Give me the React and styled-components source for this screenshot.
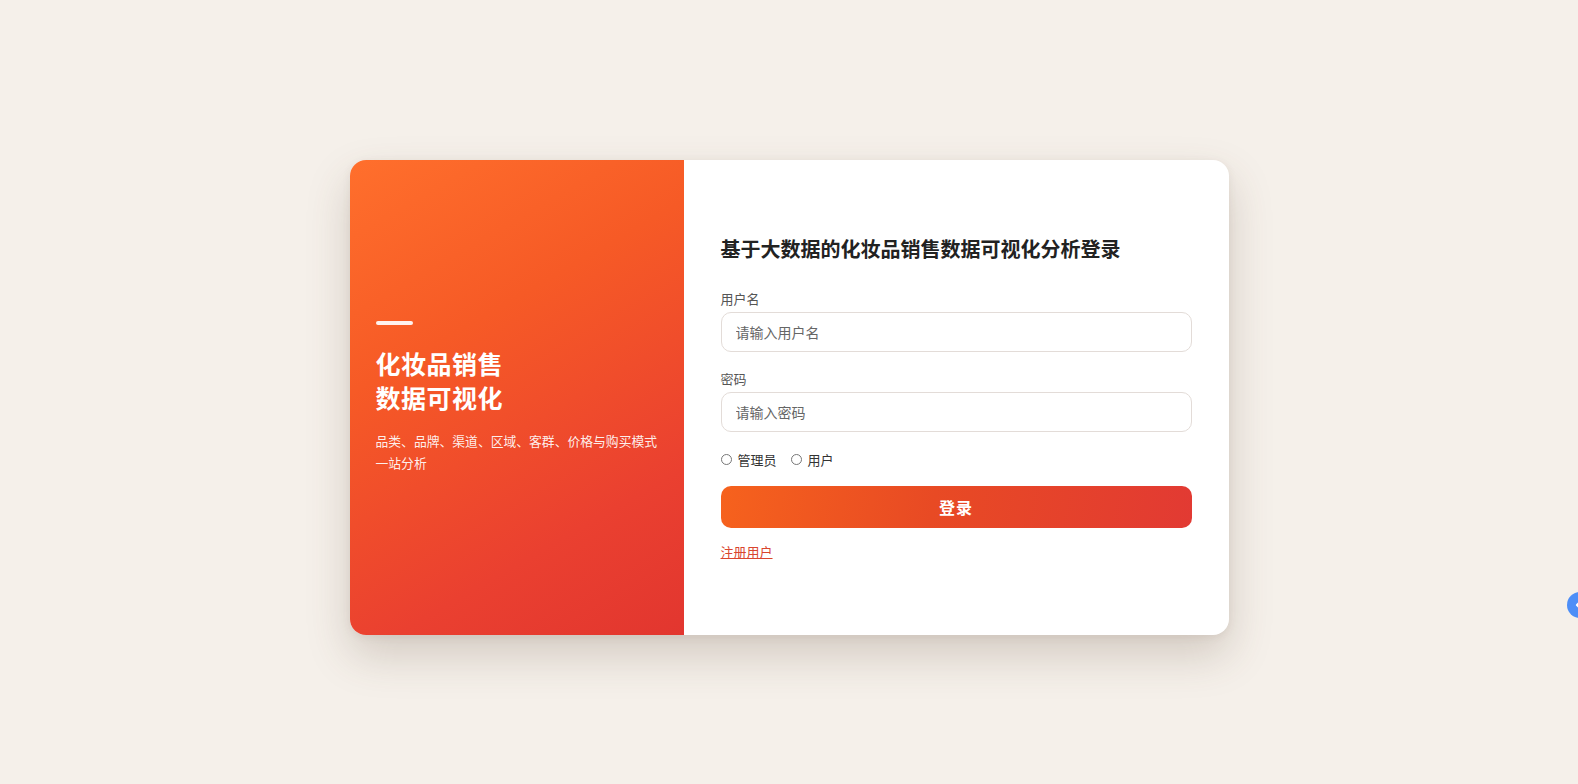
import React, { useState } from 'react';
import styled, { createGlobalStyle } from 'styled-components';

const GlobalStyle = createGlobalStyle`
  * { box-sizing: border-box; }
  html, body { margin: 0; padding: 0; }
  body {
    background: #f5f0ea;
    font-family: "Noto Sans CJK SC", "Noto Sans", sans-serif;
    color: #222;
    overflow: hidden;
  }
`;

const Page = styled.div`
  display: flex;
  align-items: center;
  justify-content: center;
  width: 100%;
  height: 784px;
  padding-top: 11px;
`;

const Card = styled.div`
  display: grid;
  grid-template-columns: 38% 1fr;
  width: 879px;
  height: 475px;
  border-radius: 16px;
  overflow: hidden;
  background: #fff;
  box-shadow: 0 20px 44px rgba(90, 70, 50, 0.22), 0 2px 8px rgba(90, 70, 50, 0.08);
`;

const Hero = styled.div`
  display: flex;
  flex-direction: column;
  justify-content: center;
  padding: 0 20px 0 26px;
  color: #fff;
  background: linear-gradient(150deg, #ff6f2c 0%, #f65a26 35%, #ea4030 75%, #e2362f 100%);
`;

const Bar = styled.div`
  width: 37px;
  height: 4px;
  border-radius: 2px;
  background: rgba(255, 255, 255, 0.92);
  margin-bottom: 21px;
`;

const HeroTitle = styled.h1`
  margin: 0 0 16px;
  font-size: 25px;
  line-height: 34px;
  font-weight: 700;
  letter-spacing: 0.5px;
`;

const HeroText = styled.p`
  margin: 0;
  font-size: 12.8px;
  line-height: 22px;
  color: rgba(255, 255, 255, 0.92);
  white-space: nowrap;
`;

const FormPanel = styled.div`
  display: flex;
  flex-direction: column;
  justify-content: center;
  padding: 0 37px;
`;

const Title = styled.h2`
  margin: 0 0 27px;
  font-size: 20px;
  line-height: 28px;
  font-weight: 700;
  color: #222;
`;

const Label = styled.label`
  display: block;
  font-size: 13px;
  line-height: 18px;
  color: #555;
  margin-bottom: 4px;
`;

const Input = styled.input`
  display: block;
  width: 100%;
  height: 40px;
  padding: 0 14px;
  border: 1px solid #e3dcd8;
  border-radius: 10px;
  font-family: inherit;
  font-size: 14px;
  color: #333;
  outline: none;
  margin-bottom: 18px;
  &::placeholder { color: #666; }
`;

const RoleRow = styled.div`
  display: flex;
  align-items: center;
  gap: 14px;
  margin: 0 0 17px;
`;

const Role = styled.label`
  display: flex;
  align-items: center;
  gap: 6px;
  font-size: 13px;
  color: #333;
  cursor: pointer;
`;

const Radio = styled.input`
  margin: 0;
  width: 11px;
  height: 11px;
`;

const Submit = styled.button`
  width: 100%;
  height: 42px;
  border: none;
  border-radius: 10px;
  background: linear-gradient(100deg, #f6621d 0%, #e84a24 45%, #e23a33 100%);
  color: #fff;
  font-family: inherit;
  font-size: 16px;
  font-weight: 700;
  letter-spacing: 1px;
  cursor: pointer;
  margin-bottom: 15px;
`;

const RegisterLink = styled.a`
  align-self: flex-start;
  font-size: 13px;
  line-height: 18px;
  color: #d9452e;
  text-decoration: underline;
  cursor: pointer;
`;

const Floater = styled.div`
  position: fixed;
  left: 1567px;
  top: 592px;
  width: 26px;
  height: 26px;
  border-radius: 50%;
  background: #4d8ef7;
  display: flex;
  align-items: center;
  padding-left: 8px;
`;

export default function App() {
  const [role, setRole] = useState('');

  return (
    <>
      <GlobalStyle />
      <Page>
        <Card>
          <Hero>
            <Bar />
            <HeroTitle>
              化妆品销售
              <br />
              数据可视化
            </HeroTitle>
            <HeroText>
              品类、品牌、渠道、区域、客群、价格与购买模式
              <br />
              一站分析
            </HeroText>
          </Hero>
          <FormPanel>
            <Title>基于大数据的化妆品销售数据可视化分析登录</Title>
            <Label htmlFor="username">用户名</Label>
            <Input id="username" type="text" placeholder="请输入用户名" />
            <Label htmlFor="password">密码</Label>
            <Input id="password" type="password" placeholder="请输入密码" />
            <RoleRow>
              <Role>
                <Radio
                  type="radio"
                  name="role"
                  checked={role === 'admin'}
                  onChange={() => setRole('admin')}
                />
                管理员
              </Role>
              <Role>
                <Radio
                  type="radio"
                  name="role"
                  checked={role === 'user'}
                  onChange={() => setRole('user')}
                />
                用户
              </Role>
            </RoleRow>
            <Submit type="button">登录</Submit>
            <RegisterLink>注册用户</RegisterLink>
          </FormPanel>
        </Card>
      </Page>
      <Floater>
        <svg width="8" height="10" viewBox="0 0 8 10">
          <path d="M6 1 L2 5 L6 9" stroke="#fff" strokeWidth="2.2" fill="none" strokeLinecap="round" strokeLinejoin="round" />
        </svg>
      </Floater>
    </>
  );
}
